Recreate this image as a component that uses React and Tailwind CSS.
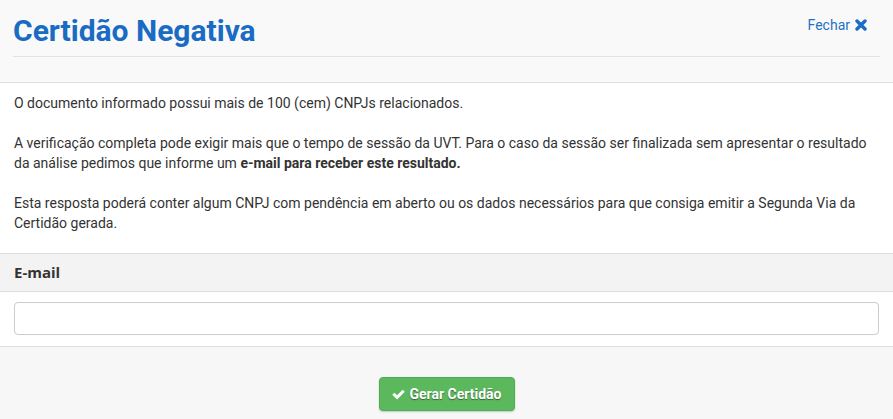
import React, { useState } from 'react';

const CheckIcon = () => (
  <svg width="15" height="12" viewBox="0 0 26 22" className="mr-[3px]">
    <path d="M1.5 12.5 L5.5 8.5 L10.5 13.5 L20.5 3 L24.5 7 L10.5 21 Z" fill="#fff" />
  </svg>
);

const TimesIcon = () => (
  <svg width="12" height="12" viewBox="0 0 12 12" className="ml-[5px]">
    <path d="M2 2 L10 10 M10 2 L2 10" stroke="#1a6cc4" strokeWidth="3.4" strokeLinecap="round" />
  </svg>
);

const App = () => {
  const [email, setEmail] = useState('');

  return (
    <div className="w-[893px] h-[419px] bg-[#f7f7f7] overflow-hidden font-['Roboto','Liberation_Sans',sans-serif] text-[#333]">
      {/* Header */}
      <div className="bg-[#f9f9f9] border-b border-[#dedede] h-[83px] px-[13px] pt-[10px]">
        <div className="flex justify-between items-start border-b border-[#e3e3e3] h-[47px]">
          <h1 className="text-[30px] leading-[42px] font-bold text-[#1a6bc4]">Certidão Negativa</h1>
          <button className="flex items-center text-[14px] leading-[20px] text-[#1f72c6] mt-[5px] mr-[13px]">
            Fechar <TimesIcon />
          </button>
        </div>
      </div>

      {/* Body */}
      <div className="bg-white px-[14px] pt-[10px] pb-[20px] text-[14px] leading-[20px]">
        <p>O documento informado possui mais de 100 (cem) CNPJs relacionados.</p>
        <p className="mt-[20px]">
          A verificação completa pode exigir mais que o tempo de sessão da UVT. Para o caso da sessão ser finalizada sem apresentar o resultado da análise pedimos que informe um <b>e-mail para receber este resultado.</b>
        </p>
        <p className="mt-[20px]">
          Esta resposta poderá conter algum CNPJ com pendência em aberto ou os dados necessários para que consiga emitir a Segunda Via da Certidão gerada.
        </p>
      </div>

      {/* E-mail band */}
      <div className="bg-[#f3f3f3] border-y border-[#dddddd] h-[39px] px-[14px] flex items-center">
        <span className="font-['Open_Sans','Liberation_Sans',sans-serif] font-bold text-[15px] text-[#333]">E-mail</span>
      </div>
      <div className="bg-white border-b border-[#dddddd] h-[55px] px-[14px] pt-[10px]">
        <input
          type="email"
          value={email}
          onChange={(e) => setEmail(e.target.value)}
          className="w-full h-[33px] border border-[#cccccc] rounded-[4px] bg-white px-3 text-[14px] outline-none"
        />
      </div>

      {/* Footer */}
      <div className="flex justify-center pt-[30px]">
        <button className="flex items-center justify-center w-[136px] h-[34px] rounded-[4px] bg-[#5cb85c] border border-[#4cae4c] text-white font-bold text-[14px] [text-shadow:0_1px_1px_rgba(0,0,0,0.45)] shadow-[0_1px_2px_rgba(0,0,0,0.2)]">
          <CheckIcon />
          Gerar Certidão
        </button>
      </div>
    </div>
  );
};

export default App;
